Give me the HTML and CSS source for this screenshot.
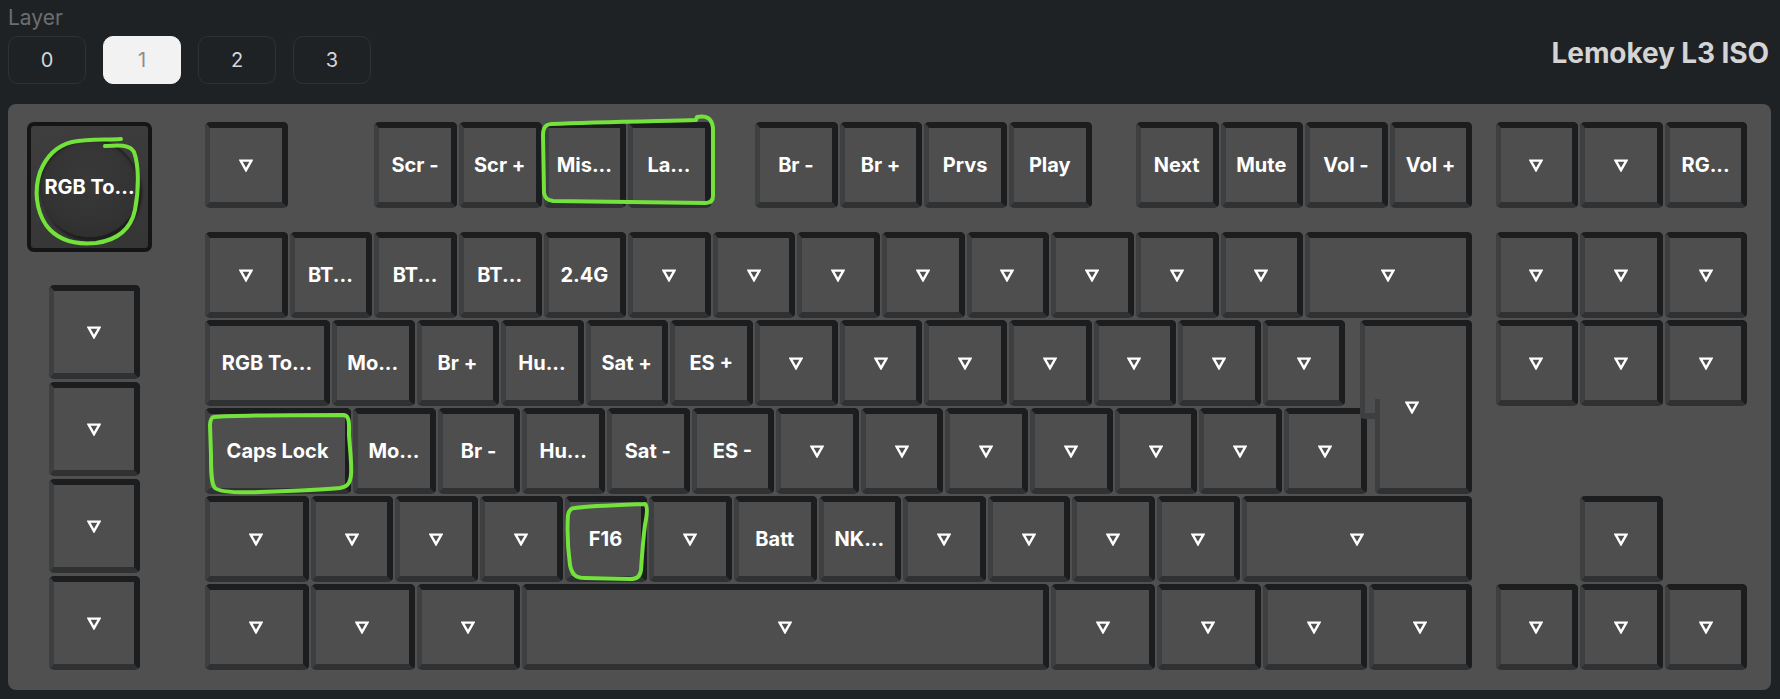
FILE: index.html
```html
<!DOCTYPE html>
<html lang="en">
<head>
<meta charset="utf-8">
<title>Lemokey L3 ISO</title>
<link rel="stylesheet" href="styles.css">
</head>
<body>
<header class="top">
  <div class="layer-group">
    <div class="layer-label">Layer</div>
    <div class="layers">
      <div class="lbtn">0</div>
      <div class="lbtn on">1</div>
      <div class="lbtn">2</div>
      <div class="lbtn">3</div>
    </div>
  </div>
  <h1 class="title">Lemokey L3 ISO</h1>
</header>

<main class="panel">
  <div class="side">
    <div class="knob"><div class="dial">RGB To...</div></div>
    <div class="macros">
      <div class="k mk"><svg class="tri" viewBox="0 0 14 13"><path d="M1.6 1.6H12.4L7 11.2Z"/></svg></div>
      <div class="k mk"><svg class="tri" viewBox="0 0 14 13"><path d="M1.6 1.6H12.4L7 11.2Z"/></svg></div>
      <div class="k mk"><svg class="tri" viewBox="0 0 14 13"><path d="M1.6 1.6H12.4L7 11.2Z"/></svg></div>
      <div class="k mk"><svg class="tri" viewBox="0 0 14 13"><path d="M1.6 1.6H12.4L7 11.2Z"/></svg></div>
    </div>
  </div>

  <div class="keys">
    <!-- row 0 -->
    <div class="k u1"><svg class="tri" viewBox="0 0 14 13"><path d="M1.6 1.6H12.4L7 11.2Z"/></svg></div>
    <div class="s4"></div>
    <div class="k u1">Scr -</div>
    <div class="k u1">Scr +</div>
    <div class="k u1">Mis...</div>
    <div class="k u1">La...</div>
    <div class="s2"></div>
    <div class="k u1">Br -</div>
    <div class="k u1">Br +</div>
    <div class="k u1">Prvs</div>
    <div class="k u1">Play</div>
    <div class="s2"></div>
    <div class="k u1">Next</div>
    <div class="k u1">Mute</div>
    <div class="k u1">Vol -</div>
    <div class="k u1">Vol +</div>
    <div class="s1"></div>
    <div class="k u1"><svg class="tri" viewBox="0 0 14 13"><path d="M1.6 1.6H12.4L7 11.2Z"/></svg></div>
    <div class="k u1"><svg class="tri" viewBox="0 0 14 13"><path d="M1.6 1.6H12.4L7 11.2Z"/></svg></div>
    <div class="k u1">RG...</div>

    <div class="gaprow"></div>

    <!-- row 2 -->
    <div class="k u1"><svg class="tri" viewBox="0 0 14 13"><path d="M1.6 1.6H12.4L7 11.2Z"/></svg></div>
    <div class="k u1">BT...</div>
    <div class="k u1">BT...</div>
    <div class="k u1">BT...</div>
    <div class="k u1">2.4G</div>
    <div class="k u1"><svg class="tri" viewBox="0 0 14 13"><path d="M1.6 1.6H12.4L7 11.2Z"/></svg></div>
    <div class="k u1"><svg class="tri" viewBox="0 0 14 13"><path d="M1.6 1.6H12.4L7 11.2Z"/></svg></div>
    <div class="k u1"><svg class="tri" viewBox="0 0 14 13"><path d="M1.6 1.6H12.4L7 11.2Z"/></svg></div>
    <div class="k u1"><svg class="tri" viewBox="0 0 14 13"><path d="M1.6 1.6H12.4L7 11.2Z"/></svg></div>
    <div class="k u1"><svg class="tri" viewBox="0 0 14 13"><path d="M1.6 1.6H12.4L7 11.2Z"/></svg></div>
    <div class="k u1"><svg class="tri" viewBox="0 0 14 13"><path d="M1.6 1.6H12.4L7 11.2Z"/></svg></div>
    <div class="k u1"><svg class="tri" viewBox="0 0 14 13"><path d="M1.6 1.6H12.4L7 11.2Z"/></svg></div>
    <div class="k u1"><svg class="tri" viewBox="0 0 14 13"><path d="M1.6 1.6H12.4L7 11.2Z"/></svg></div>
    <div class="k u2"><svg class="tri" viewBox="0 0 14 13"><path d="M1.6 1.6H12.4L7 11.2Z"/></svg></div>
    <div class="s1"></div>
    <div class="k u1"><svg class="tri" viewBox="0 0 14 13"><path d="M1.6 1.6H12.4L7 11.2Z"/></svg></div>
    <div class="k u1"><svg class="tri" viewBox="0 0 14 13"><path d="M1.6 1.6H12.4L7 11.2Z"/></svg></div>
    <div class="k u1"><svg class="tri" viewBox="0 0 14 13"><path d="M1.6 1.6H12.4L7 11.2Z"/></svg></div>

    <!-- row 3 -->
    <div class="k u15">RGB To...</div>
    <div class="k u1">Mo...</div>
    <div class="k u1">Br +</div>
    <div class="k u1">Hu...</div>
    <div class="k u1">Sat +</div>
    <div class="k u1">ES +</div>
    <div class="k u1"><svg class="tri" viewBox="0 0 14 13"><path d="M1.6 1.6H12.4L7 11.2Z"/></svg></div>
    <div class="k u1"><svg class="tri" viewBox="0 0 14 13"><path d="M1.6 1.6H12.4L7 11.2Z"/></svg></div>
    <div class="k u1"><svg class="tri" viewBox="0 0 14 13"><path d="M1.6 1.6H12.4L7 11.2Z"/></svg></div>
    <div class="k u1"><svg class="tri" viewBox="0 0 14 13"><path d="M1.6 1.6H12.4L7 11.2Z"/></svg></div>
    <div class="k u1"><svg class="tri" viewBox="0 0 14 13"><path d="M1.6 1.6H12.4L7 11.2Z"/></svg></div>
    <div class="k u1"><svg class="tri" viewBox="0 0 14 13"><path d="M1.6 1.6H12.4L7 11.2Z"/></svg></div>
    <div class="k u1"><svg class="tri" viewBox="0 0 14 13"><path d="M1.6 1.6H12.4L7 11.2Z"/></svg></div>
    <div class="s1"></div>
    <div class="enter"><svg class="tri" viewBox="0 0 14 13"><path d="M1.6 1.6H12.4L7 11.2Z"/></svg></div>
    <div class="s1"></div>
    <div class="k u1"><svg class="tri" viewBox="0 0 14 13"><path d="M1.6 1.6H12.4L7 11.2Z"/></svg></div>
    <div class="k u1"><svg class="tri" viewBox="0 0 14 13"><path d="M1.6 1.6H12.4L7 11.2Z"/></svg></div>
    <div class="k u1"><svg class="tri" viewBox="0 0 14 13"><path d="M1.6 1.6H12.4L7 11.2Z"/></svg></div>

    <!-- row 4 -->
    <div class="k u175">Caps Lock</div>
    <div class="k u1">Mo...</div>
    <div class="k u1">Br -</div>
    <div class="k u1">Hu...</div>
    <div class="k u1">Sat -</div>
    <div class="k u1">ES -</div>
    <div class="k u1"><svg class="tri" viewBox="0 0 14 13"><path d="M1.6 1.6H12.4L7 11.2Z"/></svg></div>
    <div class="k u1"><svg class="tri" viewBox="0 0 14 13"><path d="M1.6 1.6H12.4L7 11.2Z"/></svg></div>
    <div class="k u1"><svg class="tri" viewBox="0 0 14 13"><path d="M1.6 1.6H12.4L7 11.2Z"/></svg></div>
    <div class="k u1"><svg class="tri" viewBox="0 0 14 13"><path d="M1.6 1.6H12.4L7 11.2Z"/></svg></div>
    <div class="k u1"><svg class="tri" viewBox="0 0 14 13"><path d="M1.6 1.6H12.4L7 11.2Z"/></svg></div>
    <div class="k u1"><svg class="tri" viewBox="0 0 14 13"><path d="M1.6 1.6H12.4L7 11.2Z"/></svg></div>
    <div class="k u1"><svg class="tri" viewBox="0 0 14 13"><path d="M1.6 1.6H12.4L7 11.2Z"/></svg></div>
    <div class="s13"></div>

    <!-- row 5 -->
    <div class="k u125"><svg class="tri" viewBox="0 0 14 13"><path d="M1.6 1.6H12.4L7 11.2Z"/></svg></div>
    <div class="k u1"><svg class="tri" viewBox="0 0 14 13"><path d="M1.6 1.6H12.4L7 11.2Z"/></svg></div>
    <div class="k u1"><svg class="tri" viewBox="0 0 14 13"><path d="M1.6 1.6H12.4L7 11.2Z"/></svg></div>
    <div class="k u1"><svg class="tri" viewBox="0 0 14 13"><path d="M1.6 1.6H12.4L7 11.2Z"/></svg></div>
    <div class="k u1">F16</div>
    <div class="k u1"><svg class="tri" viewBox="0 0 14 13"><path d="M1.6 1.6H12.4L7 11.2Z"/></svg></div>
    <div class="k u1">Batt</div>
    <div class="k u1">NK...</div>
    <div class="k u1"><svg class="tri" viewBox="0 0 14 13"><path d="M1.6 1.6H12.4L7 11.2Z"/></svg></div>
    <div class="k u1"><svg class="tri" viewBox="0 0 14 13"><path d="M1.6 1.6H12.4L7 11.2Z"/></svg></div>
    <div class="k u1"><svg class="tri" viewBox="0 0 14 13"><path d="M1.6 1.6H12.4L7 11.2Z"/></svg></div>
    <div class="k u1"><svg class="tri" viewBox="0 0 14 13"><path d="M1.6 1.6H12.4L7 11.2Z"/></svg></div>
    <div class="k u275"><svg class="tri" viewBox="0 0 14 13"><path d="M1.6 1.6H12.4L7 11.2Z"/></svg></div>
    <div class="s5"></div>
    <div class="k u1"><svg class="tri" viewBox="0 0 14 13"><path d="M1.6 1.6H12.4L7 11.2Z"/></svg></div>
    <div class="s4"></div>

    <!-- row 6 -->
    <div class="k u125"><svg class="tri" viewBox="0 0 14 13"><path d="M1.6 1.6H12.4L7 11.2Z"/></svg></div>
    <div class="k u125"><svg class="tri" viewBox="0 0 14 13"><path d="M1.6 1.6H12.4L7 11.2Z"/></svg></div>
    <div class="k u125"><svg class="tri" viewBox="0 0 14 13"><path d="M1.6 1.6H12.4L7 11.2Z"/></svg></div>
    <div class="k u625"><svg class="tri" viewBox="0 0 14 13"><path d="M1.6 1.6H12.4L7 11.2Z"/></svg></div>
    <div class="k u125"><svg class="tri" viewBox="0 0 14 13"><path d="M1.6 1.6H12.4L7 11.2Z"/></svg></div>
    <div class="k u125"><svg class="tri" viewBox="0 0 14 13"><path d="M1.6 1.6H12.4L7 11.2Z"/></svg></div>
    <div class="k u125"><svg class="tri" viewBox="0 0 14 13"><path d="M1.6 1.6H12.4L7 11.2Z"/></svg></div>
    <div class="k u125"><svg class="tri" viewBox="0 0 14 13"><path d="M1.6 1.6H12.4L7 11.2Z"/></svg></div>
    <div class="s1"></div>
    <div class="k u1"><svg class="tri" viewBox="0 0 14 13"><path d="M1.6 1.6H12.4L7 11.2Z"/></svg></div>
    <div class="k u1"><svg class="tri" viewBox="0 0 14 13"><path d="M1.6 1.6H12.4L7 11.2Z"/></svg></div>
    <div class="k u1"><svg class="tri" viewBox="0 0 14 13"><path d="M1.6 1.6H12.4L7 11.2Z"/></svg></div>
  </div>
</main>

<svg class="ink" width="1780" height="699" viewBox="0 0 1780 699">
  <path d="M105 146 C118 145 130 144 134 152 C139 165 139 190 135 210 C131 228 118 240 96 243 C75 245 57 240 46 225 C36 210 34 190 40 172 C46 157 56 146 72 142 C88 139 105 140 121 139"/>
  <path d="M551 124 C600 122 660 121 696 120 L697 117 C706 115 712 118 713 128 L713 196 C713 201 710 203 705 203 L553 201 C547 200 545 198 544 193 L543 135 C543 128 546 124 551 124"/>
  <path d="M214 417 C240 415 300 415 344 415 C350 416 349 425 349 435 C350 450 352 465 351 475 C350 485 346 487 340 488 C320 490 290 491 260 492 C235 493 220 492 215 488 C211 484 211 470 211 455 L210 425 C210 420 212 417 214 417"/>
  <path d="M575 508 C590 506 620 505 645 504 C648 506 647 515 645 525 C643 540 642 555 641 570 C640 577 637 579 630 579 L585 578 C576 578 572 575 570 565 C568 550 567 530 568 515 C569 510 571 508 575 508"/>
</svg>
</body>
</html>
```

FILE: styles.css
```css
* { box-sizing: border-box; }

body {
  margin: 0;
  width: 1780px;
  height: 699px;
  overflow: hidden;
  position: relative;
  background: #1f2224;
  font-family: Inter, Roboto, "Liberation Sans", sans-serif;
}

.top {
  display: flex;
  justify-content: space-between;
  height: 84px;
  padding: 0 11px 0 8px;
}

.layer-label {
  padding-top: 6px;
  font-size: 21px;
  line-height: 24px;
  color: #6b6e71;
}

.layers {
  display: flex;
  gap: 17px;
  margin-top: 6px;
}

.lbtn {
  width: 78px;
  height: 48px;
  border: 1px solid #2f3235;
  border-radius: 10px;
  display: flex;
  align-items: center;
  justify-content: center;
  font-size: 20px;
  color: #d6d6d6;
}

.lbtn.on {
  background: #f2f2f2;
  border-color: #f2f2f2;
  color: #8d8d8d;
}

.title {
  margin: 36px 0 0;
  font-size: 28px;
  line-height: 34px;
  font-weight: 700;
  letter-spacing: -0.1px;
  color: #d4d4d4;
}

.panel {
  margin: 20px 9px 0 8px;
  height: 586px;
  background: #505050;
  border-radius: 8px;
  padding: 17px 0 19px 18px;
  display: flex;
}

.side {
  width: 178px;
  flex: none;
  display: flex;
  flex-direction: column;
}

.knob {
  margin: 1px;
  width: 125px;
  height: 130px;
  border: 4px solid #141516;
  border-radius: 7px;
  background: linear-gradient(160deg, #3e3e3e, #353535);
  display: flex;
  align-items: center;
  justify-content: center;
}

.dial {
  width: 99px;
  height: 99px;
  border-radius: 50%;
  background: radial-gradient(circle at 50% 38%, #393939 0%, #333333 60%, #2b2b2b 100%);
  box-shadow: 3px 5px 3px rgba(0, 0, 0, 0.45), inset 0 3px 3px rgba(0, 0, 0, 0.35);
  display: flex;
  align-items: center;
  justify-content: center;
  color: #fff;
  font-weight: 700;
  font-size: 20px;
  white-space: nowrap;
}

.macros {
  margin: 32px 0 0 23px;
  display: flex;
  flex-direction: column;
  gap: 3px;
}

.keys {
  display: grid;
  grid-template-columns: repeat(73, 21.17px);
  grid-template-rows: 88px 22px repeat(5, 88px);
}

.k {
  margin: 1px;
  border-style: solid;
  border-width: 6px 6px 6px 5px;
  border-color: #1b1d1e #1b1d1e #2f3132 #3e3f40;
  border-radius: 5px;
  background: #4e4e4e;
  display: flex;
  align-items: center;
  justify-content: center;
  color: #fff;
  font-weight: 700;
  font-size: 20px;
  white-space: nowrap;
  overflow: hidden;
}

.k.mk {
  margin: 0;
  width: 91px;
  height: 94px;
}

.tri {
  width: 14px;
  height: 13px;
  flex: none;
}

.tri path {
  fill: none;
  stroke: #fff;
  stroke-width: 2.4;
  stroke-linejoin: miter;
}

.u1 { grid-column: span 4; }
.u125 { grid-column: span 5; }
.u15 { grid-column: span 6; }
.u175 { grid-column: span 7; }
.u2 { grid-column: span 8; }
.u275 { grid-column: span 11; }
.u625 { grid-column: span 25; }

.s1 { grid-column: span 1; }
.s2 { grid-column: span 2; }
.s4 { grid-column: span 4; }
.s5 { grid-column: span 5; }
.s13 { grid-column: span 13; }
.gaprow { grid-column: 1 / -1; }

.enter {
  grid-column: span 5;
  grid-row: span 2;
  position: relative;
}

.enter::before {
  content: "";
  position: absolute;
  left: -8px;
  right: 1px;
  top: 1px;
  height: 87px;
  border-style: solid;
  border-width: 6px 6px 6px 5px;
  border-color: #1b1d1e #1b1d1e #3e3f40 #3e3f40;
  border-radius: 5px 5px 0 5px;
  background: #4e4e4e;
}

.enter::after {
  content: "";
  position: absolute;
  left: 7px;
  right: 1px;
  top: 80px;
  bottom: 1px;
  border-style: solid;
  border-width: 0 6px 6px 5px;
  border-color: #1b1d1e #1b1d1e #2f3132 #3e3f40;
  border-radius: 0 0 5px 5px;
  background: #4e4e4e;
}

.enter .tri {
  position: absolute;
  z-index: 1;
  left: 37px;
  top: 82px;
}

.ink {
  position: absolute;
  left: 0;
  top: 0;
  pointer-events: none;
}

.ink path {
  fill: none;
  stroke: #73e23b;
  stroke-width: 4;
  stroke-linecap: round;
  stroke-linejoin: round;
}
```
